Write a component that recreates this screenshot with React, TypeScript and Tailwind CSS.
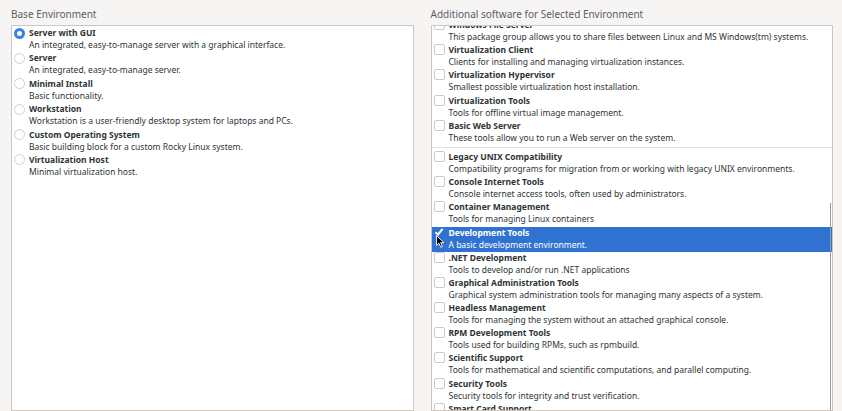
import React from "react";

type Group = { name: string; desc: string; checked?: boolean };

const environments: Group[] = [
  { name: "Server with GUI", desc: "An integrated, easy-to-manage server with a graphical interface.", checked: true },
  { name: "Server", desc: "An integrated, easy-to-manage server." },
  { name: "Minimal Install", desc: "Basic functionality." },
  { name: "Workstation", desc: "Workstation is a user-friendly desktop system for laptops and PCs." },
  { name: "Custom Operating System", desc: "Basic building block for a custom Rocky Linux system." },
  { name: "Virtualization Host", desc: "Minimal virtualization host." },
];

const envAddons: Group[] = [
  { name: "Windows File Server", desc: "This package group allows you to share files between Linux and MS Windows(tm) systems." },
  { name: "Virtualization Client", desc: "Clients for installing and managing virtualization instances." },
  { name: "Virtualization Hypervisor", desc: "Smallest possible virtualization host installation." },
  { name: "Virtualization Tools", desc: "Tools for offline virtual image management." },
  { name: "Basic Web Server", desc: "These tools allow you to run a Web server on the system." },
];

const commonAddons: Group[] = [
  { name: "Legacy UNIX Compatibility", desc: "Compatibility programs for migration from or working with legacy UNIX environments." },
  { name: "Console Internet Tools", desc: "Console internet access tools, often used by administrators." },
  { name: "Container Management", desc: "Tools for managing Linux containers" },
  { name: "Development Tools", desc: "A basic development environment.", checked: true },
  { name: ".NET Development", desc: "Tools to develop and/or run .NET applications" },
  { name: "Graphical Administration Tools", desc: "Graphical system administration tools for managing many aspects of a system." },
  { name: "Headless Management", desc: "Tools for managing the system without an attached graphical console." },
  { name: "RPM Development Tools", desc: "Tools used for building RPMs, such as rpmbuild." },
  { name: "Scientific Support", desc: "Tools for mathematical and scientific computations, and parallel computing." },
  { name: "Security Tools", desc: "Security tools for integrity and trust verification." },
  { name: "Smart Card Support", desc: "Support for using smart card authentication." },
];

const Radio = ({ on }: { on?: boolean }) => (
  <span
    className={
      on
        ? "mt-[0.5px] h-[11px] w-[11px] shrink-0 rounded-full border-[3px] border-[#3584e4] bg-white"
        : "mt-[0.5px] h-[11px] w-[11px] shrink-0 rounded-full border border-[#d3d0cc] bg-white"
    }
  />
);

const Check = ({ on }: { on?: boolean }) =>
  on ? (
    <span className="flex h-[11px] w-[11px] shrink-0 items-center justify-center">
      <svg width="10" height="10" viewBox="0 0 10 10">
        <path d="M1.5 5.2 L4 7.6 L8.6 1.8" fill="none" stroke="white" strokeWidth="2" />
      </svg>
    </span>
  ) : (
    <span className="h-[11px] w-[11px] shrink-0 rounded-[2px] border border-[#cdc9c5] bg-white" />
  );

const Row = ({ g, kind }: { g: Group; kind: "radio" | "check" }) => {
  const selected = kind === "check" && g.checked;
  const h = kind === "radio" ? "h-[25.4px]" : "h-[25.2px]";
  return (
    <div
      className={
        selected
          ? `relative flex ${h} items-start gap-[4px] bg-[#3072d2] pl-[2px] text-white`
          : `flex ${h} items-start gap-[4px] pl-[2px] text-[#2e3436]`
      }
    >
      {kind === "radio" ? <Radio on={g.checked} /> : <Check on={g.checked} />}
      <div className="flex flex-col">
        <span className="whitespace-nowrap text-[8.5px] font-bold leading-[12px]">{g.name}</span>
        <span className="whitespace-nowrap text-[8.5px] leading-[12px]">{g.desc}</span>
      </div>
      {selected && (
        <svg className="absolute left-[4px] top-[8px]" width="9" height="13" viewBox="0 0 9 13">
          <path d="M0.5 0.5 L0.5 10.5 L3 8.3 L4.8 12.3 L6.4 11.6 L4.7 7.7 L8 7.7 Z" fill="black" stroke="white" strokeWidth="0.9" />
        </svg>
      )}
    </div>
  );
};

export default function App() {
  return (
    <div
      className="flex h-[411px] w-[842px] gap-[17px] overflow-hidden bg-[#f6f5f4] pl-[11px] pr-[9px] pt-[7px]"
      style={{ fontFamily: '"Noto Sans", "Open Sans", sans-serif' }}
    >
      {/* Base environment */}
      <div className="flex w-[403px] flex-col">
        <h2 className="mb-[3px] text-[10px] leading-[15px] text-[#5e5c64]">Base Environment</h2>
        <div className="flex-1 border border-[#cdc7c2] bg-white pt-[1px]">
          {environments.map((g) => (
            <Row key={g.name} g={g} kind="radio" />
          ))}
        </div>
      </div>

      {/* Add-ons */}
      <div className="flex w-[403px] flex-col">
        <h2 className="mb-[3px] text-[10px] leading-[15px] text-[#5e5c64]">
          Additional software for Selected Environment
        </h2>
        <div className="relative flex-1 overflow-hidden border border-[#cdc7c2] bg-white">
          <div className="-mt-[7px] flex flex-col">
            {envAddons.map((g) => (
              <Row key={g.name} g={g} kind="check" />
            ))}
            <div className="mb-[3px] mt-[2px] h-px bg-[#e3e0dd]" />
            {commonAddons.map((g) => (
              <Row key={g.name} g={g} kind="check" />
            ))}
          </div>
          {/* scroll indicator */}
          <div className="absolute bottom-0 right-[1px] top-[177px] w-[1.5px] bg-[#9a9996]" />
        </div>
      </div>
    </div>
  );
}
